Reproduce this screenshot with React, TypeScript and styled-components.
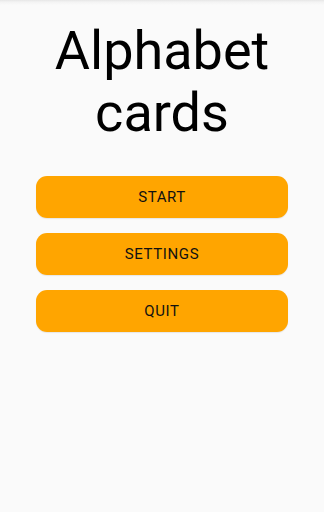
import React from 'react';
import styled, { createGlobalStyle } from 'styled-components';

const GlobalStyle = createGlobalStyle`
  html, body {
    margin: 0;
    padding: 0;
    background: #fafafa;
  }
  body {
    font-family: Roboto, 'Liberation Sans', sans-serif;
  }
`;

const Screen = styled.div`
  width: 324px;
  height: 512px;
  display: flex;
  flex-direction: column;
  align-items: center;
  background: #fafafa;
  background-image: linear-gradient(to bottom, #e6e6e6 0px, #f3f3f3 2px, #fafafa 5px);
`;

const Title = styled.h1`
  margin: 20px 0 0 0;
  font-size: 54px;
  line-height: 62px;
  font-weight: 400;
  color: #000;
  text-align: center;
`;

const Menu = styled.div`
  margin-top: 32px;
  width: 252px;
  display: flex;
  flex-direction: column;
  gap: 15px;
`;

const MenuButton = styled.button`
  height: 42px;
  border: none;
  border-radius: 11px;
  background: #ffa500;
  box-shadow: 0 1px 1px rgba(0, 0, 0, 0.08);
  font-family: Roboto, 'Liberation Sans', sans-serif;
  font-size: 15px;
  font-weight: 400;
  color: #111;
  text-transform: uppercase;
  letter-spacing: 0.6px;
  cursor: pointer;
  padding: 0;
`;

const App: React.FunctionComponent = () => {
  const items = ['Start', 'Settings', 'Quit'];
  return (
    <>
      <GlobalStyle />
      <Screen>
        <Title>
          Alphabet
          <br />
          cards
        </Title>
        <Menu>
          {items.map(label => (
            <MenuButton key={label}>{label}</MenuButton>
          ))}
        </Menu>
      </Screen>
    </>
  );
};

export default App;
